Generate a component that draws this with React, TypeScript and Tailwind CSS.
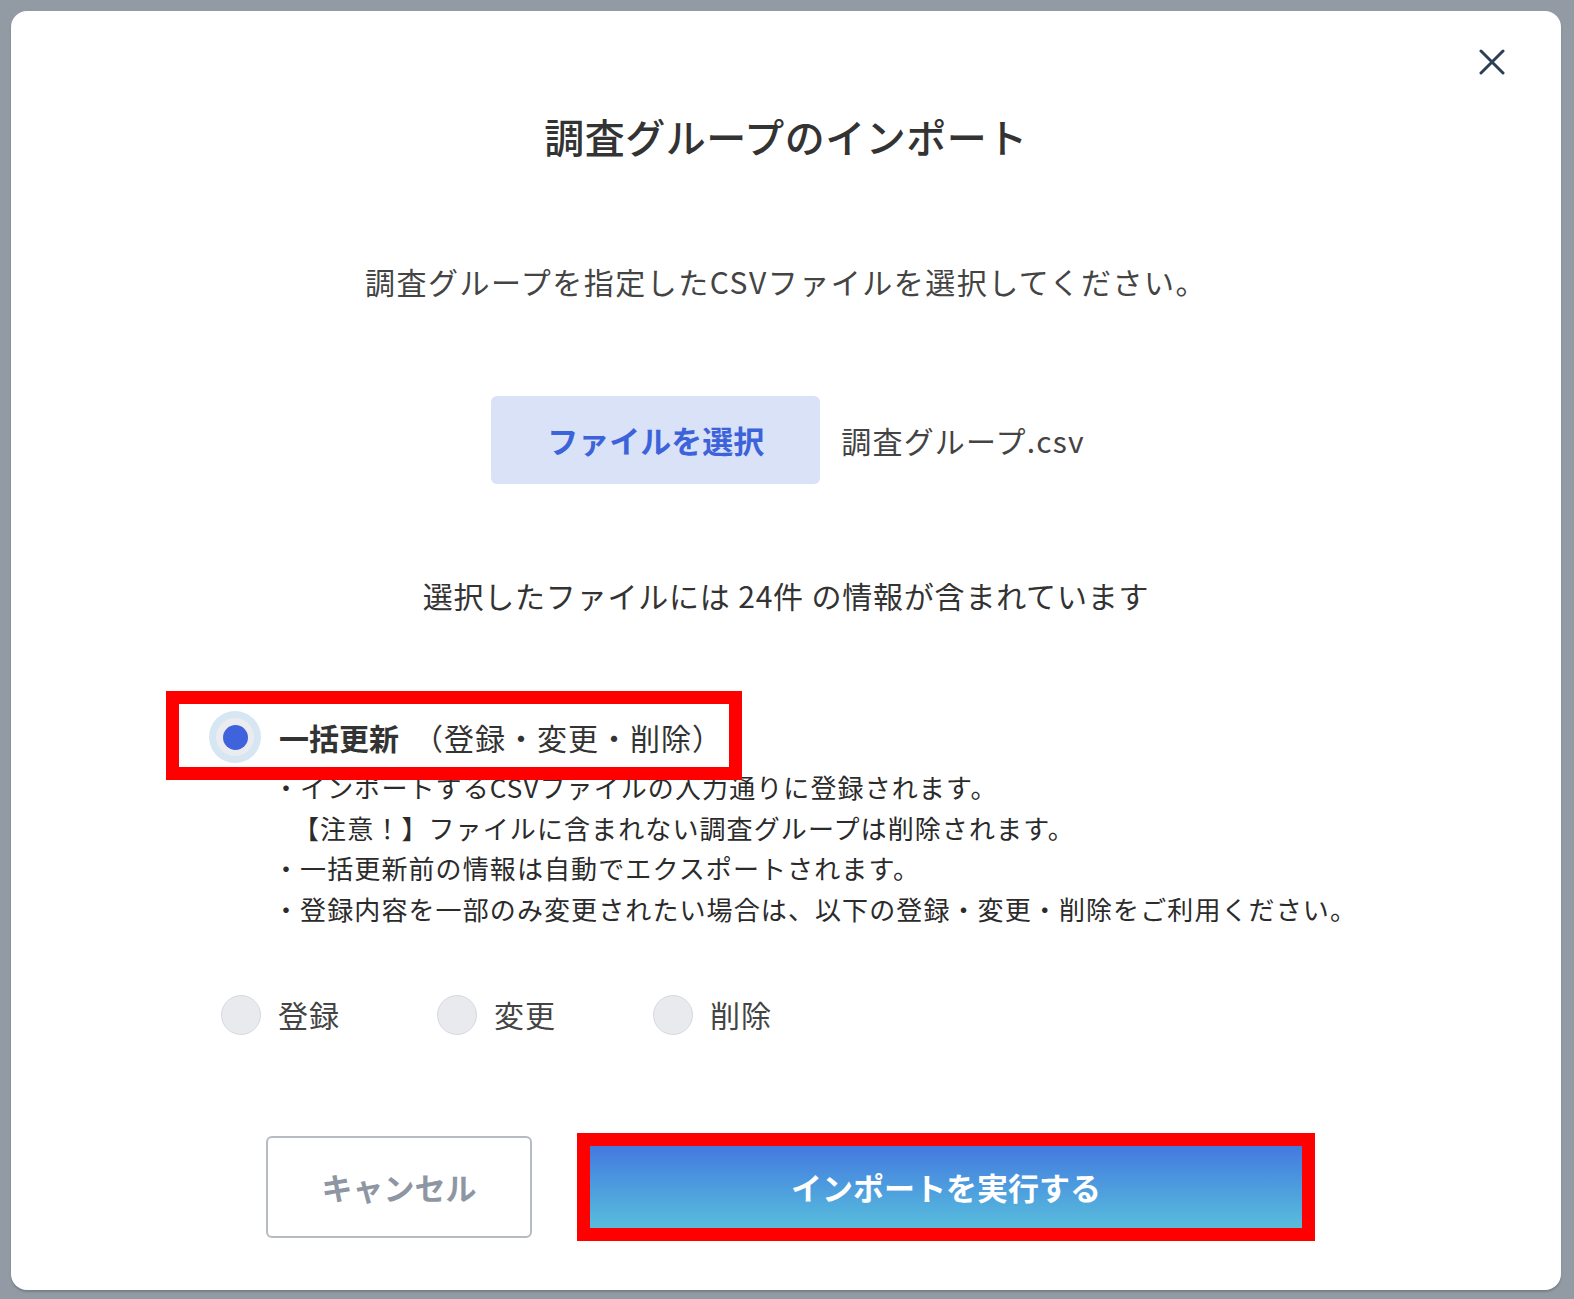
import React from "react";

const bullets = [
  "・インポートするCSVファイルの入力通りに登録されます。",
  "【注意！】ファイルに含まれない調査グループは削除されます。",
  "・一括更新前の情報は自動でエクスポートされます。",
  "・登録内容を一部のみ変更されたい場合は、以下の登録・変更・削除をご利用ください。",
];

const modes = ["登録", "変更", "削除"];

const App = () => {
  return (
    <div className="min-h-screen w-full bg-[#929ba3] pt-[11px] pl-[11px] pr-[13px] pb-[9px] font-['Noto_Sans_CJK_JP','Noto_Sans',sans-serif]">
      <div className="relative h-[1279px] rounded-[16px] bg-white shadow-[0_2px_2px_rgba(60,80,90,0.35)]">
        <button className="absolute right-[56px] top-[38px] h-[26px] w-[26px]">
          <svg viewBox="0 0 26 26" className="h-[26px] w-[26px]">
            <path d="M2 2 L24 24 M24 2 L2 24" stroke="#2d3e57" strokeWidth="3" strokeLinecap="round" />
          </svg>
        </button>

        <div className="flex flex-col items-center pt-[97px]">
          <h2 className="text-[40px] leading-[56px] font-medium text-[#333] tracking-[0.5px]">
            調査グループのインポート
          </h2>
          <p className="mt-[95px] text-[30px] leading-[44px] tracking-[1.5px] text-[#444]">
            調査グループを指定したCSVファイルを選択してください。
          </p>
          <div className="mt-[93px] flex items-center gap-[21px] pl-[4px]">
            <button className="h-[88px] w-[329px] rounded-[6px] bg-[#dae2f7] text-[31px] font-bold text-[#3d63da]">
              ファイルを選択
            </button>
            <span className="text-[30px] tracking-[1.2px] text-[#444]">調査グループ.csv</span>
          </div>
          <p className="mt-[89px] text-[30px] leading-[44px] tracking-[0.8px] text-[#333]">
            選択したファイルには 24件 の情報が含まれています
          </p>
        </div>

        <div className="mt-[94px] pl-[198px]">
          <div className="relative flex h-[52px] items-center gap-[18px]">
            <div className="flex h-[52px] w-[52px] items-center justify-center rounded-full bg-[#d6e6f3]">
              <div className="flex h-[38px] w-[38px] items-center justify-center rounded-full bg-[#ebecef]">
                <div className="h-[25px] w-[25px] rounded-full bg-[#3f63dc]" />
              </div>
            </div>
            <span className="text-[30px] text-[#333]">
              <span className="font-bold">一括更新</span>
              <span className="ml-[14px] tracking-[1px]">（登録・変更・削除）</span>
            </span>
            <div className="pointer-events-none absolute left-[-43px] top-[-20px] h-[89px] w-[576px] border-[13px] border-[#ff0000]" />
          </div>

          <ul className="mt-[4px] pl-[64px] text-[26px] leading-[40.7px] tracking-[1.1px] text-[#2b2b2b]">
            {bullets.map((b, i) => (
              <li key={i} className={i === 1 ? "pl-[20px]" : ""}>
                {b}
              </li>
            ))}
          </ul>

          <div className="ml-[12px] mt-[65px] flex h-[40px] items-center">
            {modes.map((m) => (
              <div key={m} className="flex w-[216px] items-center gap-[17px]">
                <div className="h-[40px] w-[40px] rounded-full border border-[#d6d9df] bg-[#e9eaed]" />
                <span className="text-[30px] tracking-[1px] text-[#444]">{m}</span>
              </div>
            ))}
          </div>
        </div>

        <div className="mt-[101px] flex justify-center gap-[48px] pl-[6px]">
          <button className="h-[102px] w-[266px] rounded-[6px] border-2 border-[#b5bac3] bg-white text-[31px] font-bold text-[#8e96a3]">
            キャンセル
          </button>
          <div className="relative">
            <button className="h-[102px] w-[732px] bg-linear-to-b from-[#4370df] to-[#5dc5da] text-[31px] font-bold text-white">
              インポートを実行する
            </button>
            <div className="pointer-events-none absolute -inset-[3px] border-[13px] border-[#ff0000]" />
          </div>
        </div>
      </div>
    </div>
  );
};

export default App;
